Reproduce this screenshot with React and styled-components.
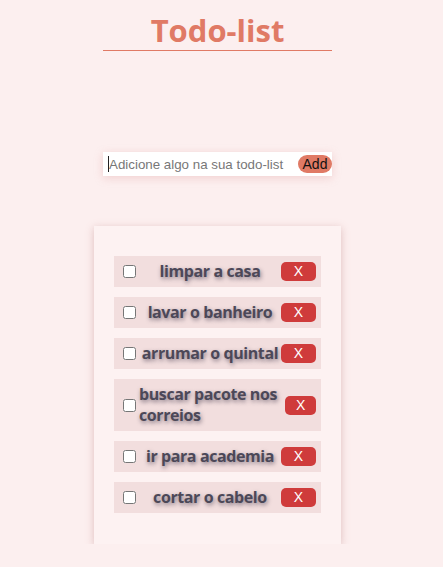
import React, { useState } from 'react';
import styled, { createGlobalStyle } from 'styled-components';

const GlobalStyle = createGlobalStyle`
  body {
    margin: 0;
    background: #fcefef;
    font-family: "Open Sans", "Noto Sans", sans-serif;
  }
`;

const Page = styled.div`
  width: 435px;
  display: flex;
  flex-direction: column;
  align-items: center;
`;

const Title = styled.h1`
  width: 229px;
  margin: 12px 0 0;
  padding-bottom: 2px;
  border-bottom: 1px solid #e07a65;
  color: #e07a65;
  font-size: 31px;
  font-weight: 700;
  line-height: 36px;
  text-align: center;
`;

const Form = styled.form`
  width: 229px;
  height: 24px;
  margin-top: 101px;
  display: flex;
  align-items: center;
  background: #fff;
  box-shadow: 0 2px 8px rgba(220, 150, 150, 0.35);
`;

const Input = styled.input`
  flex: 1;
  min-width: 0;
  height: 16px;
  margin-left: 5px;
  padding: 0;
  border: none;
  border-left: 1px solid #222;
  outline: none;
  background: transparent;
  font-family: "Liberation Sans", Arial, sans-serif;
  font-size: 13.33px;
  color: #333;

  &::placeholder {
    color: #777;
  }
`;

const AddButton = styled.button`
  width: 34px;
  height: 18px;
  padding: 0;
  border: none;
  border-radius: 9px;
  background: #e07a65;
  color: #111;
  font-family: "Liberation Sans", Arial, sans-serif;
  font-size: 14px;
  line-height: 18px;
`;

const Card = styled.div`
  width: 207px;
  margin-top: 50px;
  padding: 30px 20px 31px;
  display: flex;
  flex-direction: column;
  gap: 10px;
  background: #fdf2f2;
  box-shadow: 0 2px 8px rgba(190, 130, 130, 0.45);
`;

const Row = styled.div`
  display: flex;
  align-items: center;
  justify-content: space-between;
  padding: 5px;
  background: #f2dede;
`;

const Check = styled.input`
  width: 13px;
  height: 13px;
  margin: 3px 3px 3px 4px;
  flex-shrink: 0;
`;

const Label = styled.span`
  color: #4c4858;
  font-size: 16px;
  font-weight: 700;
  line-height: 21px;
  letter-spacing: -0.4px;
  text-shadow: 1px 2px 4px rgba(60, 50, 70, 0.6);
`;

const RemoveButton = styled.button`
  width: 35px;
  height: 19px;
  padding: 0 10px;
  border: none;
  border-radius: 5px;
  background: #cf3b3b;
  color: #fff;
  font-family: "Liberation Sans", Arial, sans-serif;
  font-size: 14px;
  line-height: 19px;
  text-align: center;
`;

const initialTodos = [
  'limpar a casa',
  'lavar o banheiro',
  'arrumar o quintal',
  'buscar pacote nos correios',
  'ir para academia',
  'cortar o cabelo',
];

export default function App() {
  const [todos, setTodos] = useState(initialTodos);
  const [text, setText] = useState('');

  const add = e => {
    e.preventDefault();
    if (!text.trim()) return;
    setTodos([...todos, text]);
    setText('');
  };

  return (
    <Page>
      <GlobalStyle />
      <Title>Todo-list</Title>
      <Form onSubmit={add}>
        <Input
          placeholder="Adicione algo na sua todo-list"
          value={text}
          onChange={e => setText(e.target.value)}
        />
        <AddButton type="submit">Add</AddButton>
      </Form>
      <Card>
        {todos.map((todo, i) => (
          <Row key={i}>
            <Check type="checkbox" />
            <Label>{todo}</Label>
            <RemoveButton onClick={() => setTodos(todos.filter((_, j) => j !== i))}>X</RemoveButton>
          </Row>
        ))}
      </Card>
    </Page>
  );
}
